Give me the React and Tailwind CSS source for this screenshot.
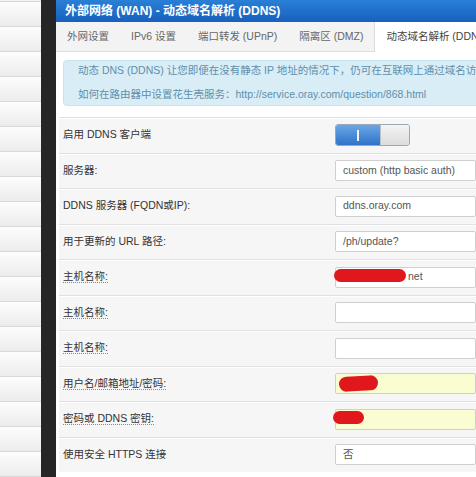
import React from 'react';

const tabs = ['外网设置', 'IPv6 设置', '端口转发 (UPnP)', '隔离区 (DMZ)', '动态域名解析 (DDNS)'];

const rows = [
  { label: '启用 DDNS 客户端', type: 'toggle' },
  { label: '服务器:', value: 'custom (http basic auth)' },
  { label: 'DDNS 服务器 (FQDN或IP):', value: 'ddns.oray.com' },
  { label: '用于更新的 URL 路径:', value: '/ph/update?' },
  { label: '主机名称:', value: 'net', dotted: true, mark: 'host' },
  { label: '主机名称:', value: '', dotted: true },
  { label: '主机名称:', value: '', dotted: true },
  { label: '用户名/邮箱地址/密码:', value: '', dotted: true, yellow: true, mark: 'user' },
  { label: '密码或 DDNS 密钥:', value: '', dotted: true, yellow: true, mark: 'pass' },
  { label: '使用安全 HTTPS 连接', value: '否' },
];

function Toggle() {
  return (
    <div className="flex h-[22px] w-[75px] overflow-hidden rounded-[3px] border border-[#9aa8b8]">
      <div className="flex w-[44px] items-center justify-center bg-gradient-to-b from-[#6aa6e6] to-[#2f72c8]">
        <div className="h-[11px] w-[2px] bg-white/90" />
      </div>
      <div className="flex-1 border-l border-[#b9c2cc] bg-gradient-to-b from-[#f4f4f4] to-[#dcdcdc]" />
    </div>
  );
}

function Field({ row }) {
  return (
    <div
      className={`relative flex h-[21px] w-[200px] items-center rounded-[2px] border border-[#cfcfcf] text-[#555] ${
        row.yellow ? 'bg-[#fafcd2]' : 'bg-white'
      } ${row.mark === 'host' ? 'pl-[72px]' : 'pl-[7px]'}`}
    >
      {row.value}
      {row.mark === 'host' && (
        <div className="absolute left-[-2px] top-[1px] h-[13px] w-[72px] rounded-full bg-[#e0171c]" />
      )}
      {row.mark === 'user' && (
        <div className="absolute left-[3px] top-[2px] h-[15px] w-[39px] -rotate-3 rounded-full bg-[#e0171c]" />
      )}
      {row.mark === 'pass' && (
        <div className="absolute left-[-3px] top-[1px] h-[13px] w-[31px] rounded-full bg-[#e0171c]" />
      )}
    </div>
  );
}

export default function App() {
  return (
    <div
      className="flex h-[477px] w-[476px] overflow-hidden bg-white text-[10.5px]"
      style={{ fontFamily: '"Liberation Sans", "Noto Sans CJK SC", sans-serif' }}
    >
      {/* left menu strip */}
      <aside className="flex w-[41px] flex-col bg-[#eeeeee]">
        <div className="h-[12px] border-b border-[#d8d8d8] bg-gradient-to-b from-[#f7f7f7] to-[#ececec]" />
        {Array.from({ length: 19 }).map((_, i) => (
          <div
            key={i}
            className="h-[25px] shrink-0 border-b border-[#d8d8d8] bg-gradient-to-b from-[#fdfdfd] to-[#ececec]"
          />
        ))}
      </aside>
      <div className="w-[15px] bg-[#262626]" />

      {/* main panel */}
      <main className="flex min-w-0 flex-1 flex-col overflow-hidden bg-white">
        <header className="flex h-[22px] shrink-0 items-center bg-gradient-to-b from-[#2a7fd6] to-[#1661bd] pl-[9px] text-[12px] font-bold text-white">
          外部网络 (WAN) - 动态域名解析 (DDNS)
        </header>

        <nav className="flex h-[30px] shrink-0 border-b border-[#dddddd] bg-[#f3f3f3]">
          {tabs.map((t, i) => (
            <div
              key={t}
              className={`flex items-center whitespace-nowrap px-[11px] ${
                i === tabs.length - 1
                  ? 'mb-[-1px] border-l border-[#dddddd] bg-white text-[#444]'
                  : 'text-[#666]'
              }`}
            >
              {t}
            </div>
          ))}
        </nav>

        <div className="px-[7px]">
          <div className="mt-[8px] flex h-[46px] w-[430px] flex-col justify-center gap-[8px] rounded-[4px] border border-[#c8e3ee] bg-[#d9edf6] pl-[14px] whitespace-nowrap text-[#5e8fab]">
            <div>动态 DNS (DDNS) 让您即便在没有静态 IP 地址的情况下，仍可在互联网上通过域名访问路由器。</div>
            <div>如何在路由器中设置花生壳服务：http://service.oray.com/question/868.html</div>
          </div>
        </div>

        <div className="ml-[3px] mt-[11px] flex flex-col">
          {rows.map((row, i) => (
            <div
              key={i}
              className="flex h-[35.5px] shrink-0 items-center border-t border-[#e0e0e0] bg-[#f6f6f6] shadow-[inset_0_1px_0_#ffffff]"
            >
              <div className="w-[276px] shrink-0 pl-[4px] text-[#333]">
                <span className={row.dotted ? 'border-b border-dotted border-[#888]' : ''}>{row.label}</span>
              </div>
              {row.type === 'toggle' ? <Toggle /> : <Field row={row} />}
            </div>
          ))}
        </div>
      </main>
    </div>
  );
}
